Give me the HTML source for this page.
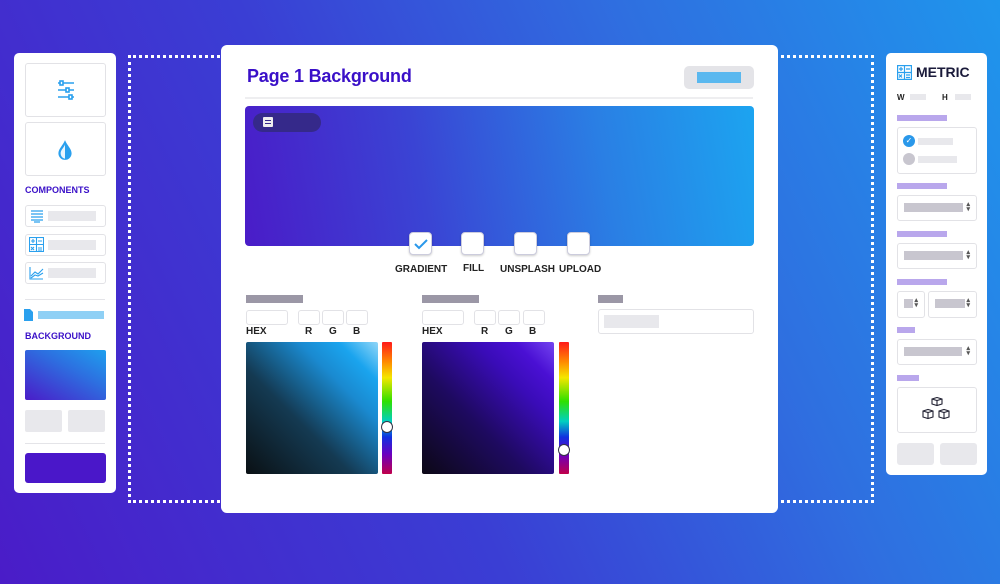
<!DOCTYPE html>
<html><head><style>
*{margin:0;padding:0;box-sizing:border-box}
body{width:1000px;height:584px;overflow:hidden;position:relative;font-family:"Liberation Sans",sans-serif;background:linear-gradient(65deg,#4a1cc8 0%,#3a3ed4 40%,#2f6fe0 70%,#1f95ec 100%)}
.a{position:absolute}
.w{background:#fff}
.g{background:#e8e8ec}
.bx{border:1px solid #e2e2e6;border-radius:3px;background:#fff}
.lbl{font-size:10px;font-weight:bold;color:#222}
.pl{background:#b9a7ec}
.sel{position:absolute;border:1px solid #e2e2e6;border-radius:3px;background:#fff}
.sel i{position:absolute;top:7px;left:6px;height:9px;background:#c8c6cf}
.sel b{position:absolute;right:6px;top:6px;font-size:7px;color:#555;line-height:5px}
.hue{background:linear-gradient(#ff1a1a 0%,#ff8a00 15%,#f4e600 27%,#2ee000 45%,#00d0c0 60%,#1030e0 72%,#6a00c0 85%,#c0004a 100%);border-radius:1px}
.knob{position:absolute;width:12px;height:12px;border-radius:50%;background:#fff;border:1.5px solid #334}
.cb{position:absolute;width:23px;height:23px;background:#fff;border-radius:4px;border:1px solid #ccd;box-shadow:0 1px 2px rgba(0,0,0,.2)}
</style></head><body>
<div class="a" style="left:128px;top:55px;width:746px;height:448px;border:3px dotted #fff"></div>

<!-- left panel -->
<div class="a w" style="left:14px;top:53px;width:102px;height:440px;border-radius:5px"></div>
<div class="a bx" style="left:25px;top:63px;width:81px;height:54px"></div>
<svg class="a" style="left:56px;top:79px" width="20" height="22" viewBox="0 0 20 22" stroke="#2aa0ee" stroke-width="1.6" fill="none"><path d="M2 4h16M2 11h16M2 18h16"/><rect x="4" y="2" width="3" height="4" fill="#fff"/><rect x="10" y="9" width="3" height="4" fill="#fff"/><rect x="13" y="16" width="3" height="4" fill="#fff"/></svg>
<div class="a bx" style="left:25px;top:122px;width:81px;height:54px"></div>
<svg class="a" style="left:57px;top:139px" width="16" height="22" viewBox="0 0 14 20"><path d="M7 1C5 6 1 9 1 13a6 6 0 0 0 12 0C13 9 9 6 7 1z" fill="#2aa0ee"/><path d="M7 5v13a5 5 0 0 1-4-5c0-3 3-5 4-8z" fill="#fff" opacity=".9"/></svg>
<div class="a" style="left:25px;top:185px;font-size:9px;font-weight:bold;color:#3a10c8">COMPONENTS</div>
<div class="a bx" style="left:25px;top:205px;width:81px;height:22px"></div>
<div class="a bx" style="left:25px;top:234px;width:81px;height:22px"></div>
<div class="a bx" style="left:25px;top:262px;width:81px;height:22px"></div>
<div class="a g" style="left:48px;top:211px;width:48px;height:10px"></div>
<div class="a g" style="left:48px;top:240px;width:48px;height:10px"></div>
<div class="a g" style="left:48px;top:268px;width:48px;height:10px"></div>
<svg class="a" style="left:30px;top:209px" width="14" height="14" stroke="#2aa0ee" stroke-width="1.3"><path d="M1 2h12M1 5h12M1 8h12M1 11h12M4 13h6"/></svg>
<svg class="a" style="left:29px;top:237px" width="15" height="15" stroke="#2aa0ee" stroke-width="1.1" fill="none"><rect x=".5" y=".5" width="14" height="14"/><path d="M7.5 1v13M1 7.5h13M2 4h4M4 2v4M9 4h4M2 10l3 3M5 10l-3 3M9 11h4M9 13h4"/></svg>
<svg class="a" style="left:29px;top:266px" width="15" height="14" stroke="#2aa0ee" stroke-width="1.1" fill="none"><path d="M1 1v12h13M2 10l4-4 3 2 5-5M2 12l4-3 3 1 5-3"/></svg>
<div class="a" style="left:25px;top:299px;width:80px;height:1px;background:#e4e4e8"></div>
<svg class="a" style="left:24px;top:309px" width="9" height="12"><path d="M0 0h6l3 3v9H0z" fill="#2aa0ee"/></svg>
<div class="a" style="left:38px;top:311px;width:66px;height:8px;background:#8fd0f5"></div>
<div class="a" style="left:25px;top:331px;font-size:9px;font-weight:bold;color:#3a10c8">BACKGROUND</div>
<div class="a" style="left:25px;top:350px;width:81px;height:50px;border-radius:2px;background:linear-gradient(30deg,#4a1cc8,#2d6fe0 60%,#1ea0ee)"></div>
<div class="a g" style="left:25px;top:410px;width:37px;height:22px;border-radius:2px"></div>
<div class="a g" style="left:68px;top:410px;width:37px;height:22px;border-radius:2px"></div>
<div class="a" style="left:25px;top:443px;width:80px;height:1px;background:#e4e4e8"></div>
<div class="a" style="left:25px;top:453px;width:81px;height:30px;border-radius:3px;background:#4a17c9"></div>

<!-- right panel -->
<div class="a w" style="left:886px;top:53px;width:101px;height:422px;border-radius:5px"></div>
<svg class="a" style="left:897px;top:65px" width="15" height="15" stroke="#2aa0ee" stroke-width="1.2" fill="none"><rect x=".6" y=".6" width="13.8" height="13.8"/><path d="M7.5 1v13M1 7.5h13M2 4h4M4 2v4M9 4h4M2 9.5l3 3M5 9.5l-3 3M9 10h4M9 12.5h4"/></svg>
<div class="a" style="left:916px;top:64px;font-size:14px;font-weight:bold;color:#1a1a3a">METRIC</div>
<div class="a" style="left:897px;top:93px;font-size:8px;font-weight:bold;color:#222">W</div>
<div class="a g" style="left:910px;top:94px;width:16px;height:6px"></div>
<div class="a" style="left:942px;top:93px;font-size:8px;font-weight:bold;color:#222">H</div>
<div class="a g" style="left:955px;top:94px;width:16px;height:6px"></div>
<div class="a pl" style="left:897px;top:115px;width:50px;height:6px"></div>
<div class="a bx" style="left:897px;top:127px;width:80px;height:47px"></div>
<div class="a" style="left:903px;top:135px;width:12px;height:12px;border-radius:50%;background:#2a98ea;color:#fff;font-size:8px;text-align:center;line-height:12px">✓</div>
<div class="a g" style="left:918px;top:138px;width:35px;height:7px"></div>
<div class="a" style="left:903px;top:153px;width:12px;height:12px;border-radius:50%;background:#c8c6cf"></div>
<div class="a g" style="left:918px;top:156px;width:39px;height:7px"></div>
<div class="a pl" style="left:897px;top:183px;width:50px;height:6px"></div>
<div class="sel" style="left:897px;top:195px;width:80px;height:26px"><i style="width:59px"></i><b>▴<br>▾</b></div>
<div class="a pl" style="left:897px;top:231px;width:50px;height:6px"></div>
<div class="sel" style="left:897px;top:243px;width:80px;height:26px"><i style="width:59px"></i><b>▴<br>▾</b></div>
<div class="a pl" style="left:897px;top:279px;width:50px;height:6px"></div>
<div class="sel" style="left:897px;top:291px;width:28px;height:27px"><i style="width:9px"></i><b>▴<br>▾</b></div>
<div class="sel" style="left:928px;top:291px;width:49px;height:27px"><i style="width:30px"></i><b>▴<br>▾</b></div>
<div class="a pl" style="left:897px;top:327px;width:18px;height:6px"></div>
<div class="sel" style="left:897px;top:339px;width:80px;height:26px"><i style="width:58px"></i><b>▴<br>▾</b></div>
<div class="a pl" style="left:897px;top:375px;width:22px;height:6px"></div>
<div class="a bx" style="left:897px;top:387px;width:80px;height:46px"></div>
<svg class="a" style="left:922px;top:397px" width="30" height="28" stroke="#223" stroke-width="1.1" fill="none"><path d="M10 2l5-1.5 5 1.5v5l-5 1.5-5-1.5z M10 2l5 1.5 5-1.5M15 3.5v5M1 14l5-1.5 5 1.5v6l-5 1.5-5-1.5z M1 14l5 1.5 5-1.5M6 15.5v6M17 14l5-1.5 5 1.5v6l-5 1.5-5-1.5z M17 14l5 1.5 5-1.5M22 15.5v6"/></svg>
<div class="a g" style="left:897px;top:443px;width:37px;height:22px;border-radius:3px"></div>
<div class="a g" style="left:940px;top:443px;width:37px;height:22px;border-radius:3px"></div>

<!-- main card -->
<div class="a w" style="left:221px;top:45px;width:557px;height:468px;border-radius:6px"></div>
<div class="a" style="left:247px;top:66px;font-size:18px;font-weight:bold;color:#3a10c8;letter-spacing:-0.2px">Page 1 Background</div>
<div class="a" style="left:684px;top:66px;width:70px;height:23px;border-radius:5px;background:#e4e4e8"></div>
<div class="a" style="left:697px;top:72px;width:44px;height:11px;background:#5ab8ef"></div>
<div class="a" style="left:245px;top:97px;width:508px;height:2px;background:#eeeef0"></div>
<div class="a" style="left:245px;top:106px;width:509px;height:140px;border-radius:4px;background:linear-gradient(80deg,#4a1cc8 0%,#3a44d4 35%,#2a7fe4 70%,#1ca4f0 100%)"></div>
<div class="a" style="left:253px;top:113px;width:68px;height:19px;border-radius:10px;background:#35298a"></div>
<div class="a" style="left:263px;top:117px;width:10px;height:10px;background:#eee;border-radius:1px"></div>
<div class="a" style="left:265px;top:120px;width:6px;height:1px;background:#35298a"></div>
<div class="a" style="left:265px;top:123px;width:6px;height:1px;background:#35298a"></div>
<div class="cb" style="left:409px;top:232px"><svg width="21" height="21"><path d="M5 11l4 4 8-8" stroke="#2a98ea" stroke-width="2" fill="none"/></svg></div>
<div class="cb" style="left:461px;top:232px"></div>
<div class="cb" style="left:514px;top:232px"></div>
<div class="cb" style="left:567px;top:232px"></div>
<div class="a lbl" style="left:395px;top:264px">GRADIENT</div>
<div class="a lbl" style="left:463px;top:263px">FILL</div>
<div class="a lbl" style="left:500px;top:264px">UNSPLASH</div>
<div class="a lbl" style="left:559px;top:264px">UPLOAD</div>

<!-- picker 1 -->
<div class="a" style="left:246px;top:295px;width:57px;height:8px;background:#9b97a6"></div>
<div class="a bx" style="left:246px;top:310px;width:42px;height:15px"></div>
<div class="a bx" style="left:298px;top:310px;width:22px;height:15px"></div>
<div class="a bx" style="left:322px;top:310px;width:22px;height:15px"></div>
<div class="a bx" style="left:346px;top:310px;width:22px;height:15px"></div>
<div class="a lbl" style="left:246px;top:326px">HEX</div>
<div class="a lbl" style="left:305px;top:326px">R</div>
<div class="a lbl" style="left:329px;top:326px">G</div>
<div class="a lbl" style="left:353px;top:326px">B</div>
<div class="a" style="left:246px;top:342px;width:132px;height:132px;border-radius:2px;background:linear-gradient(45deg,#0a1014 0%,#143a52 40%,#1a8ad0 70%,#1aa4ee 85%,#90d6f8 100%)"></div>
<div class="a hue" style="left:382px;top:342px;width:10px;height:132px"></div>
<div class="knob" style="left:381px;top:421px"></div>
<!-- picker 2 -->
<div class="a" style="left:422px;top:295px;width:57px;height:8px;background:#9b97a6"></div>
<div class="a bx" style="left:422px;top:310px;width:42px;height:15px"></div>
<div class="a bx" style="left:474px;top:310px;width:22px;height:15px"></div>
<div class="a bx" style="left:498px;top:310px;width:22px;height:15px"></div>
<div class="a bx" style="left:523px;top:310px;width:22px;height:15px"></div>
<div class="a lbl" style="left:422px;top:326px">HEX</div>
<div class="a lbl" style="left:481px;top:326px">R</div>
<div class="a lbl" style="left:505px;top:326px">G</div>
<div class="a lbl" style="left:529px;top:326px">B</div>
<div class="a" style="left:422px;top:342px;width:132px;height:132px;border-radius:2px;background:linear-gradient(45deg,#0c0816 0%,#1e0a60 40%,#3a0cb8 70%,#4a10d4 85%,#7444f0 100%)"></div>
<div class="a hue" style="left:559px;top:342px;width:10px;height:132px"></div>
<div class="knob" style="left:558px;top:444px"></div>
<!-- third -->
<div class="a" style="left:598px;top:295px;width:25px;height:8px;background:#9b97a6"></div>
<div class="a bx" style="left:598px;top:309px;width:156px;height:25px"></div>
<div class="a g" style="left:604px;top:315px;width:55px;height:13px"></div>
</body></html>
